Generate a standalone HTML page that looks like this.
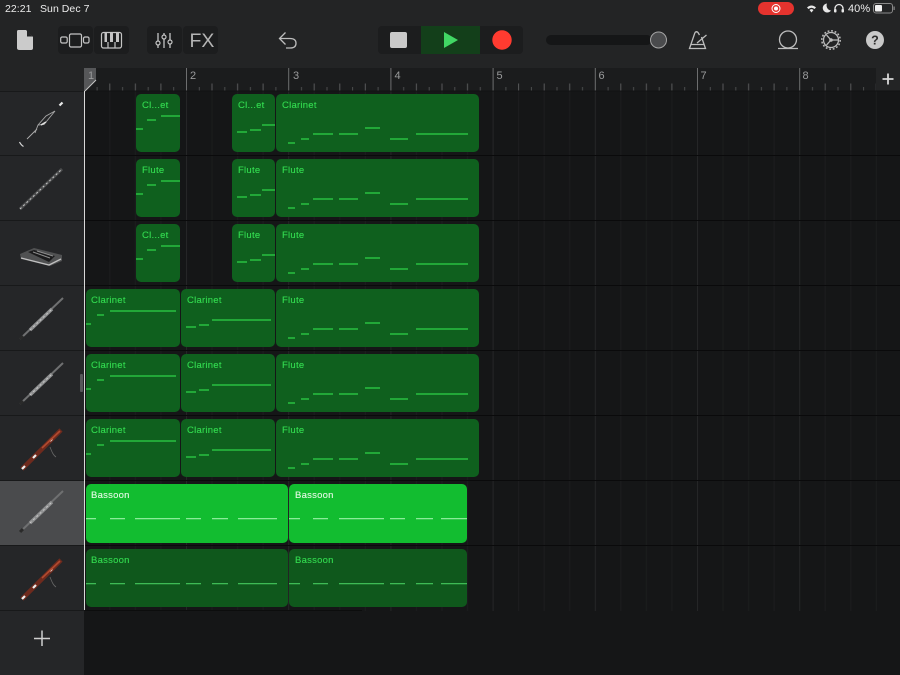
<!DOCTYPE html>
<html lang="en"><head><meta charset="utf-8"><title>GarageBand Tracks</title>
<style>
html,body{margin:0;padding:0;background:#151617;width:900px;height:675px;overflow:hidden}
svg{display:block}
text{font-family:"Liberation Sans",sans-serif}
.st{font-size:10.5px;fill:#ececec;letter-spacing:.05px}
.rn{font-size:11px;fill:#9a9b9c}
.l{font-size:9.5px;fill:#33dc50;letter-spacing:.25px;stroke:#33dc50;stroke-width:.12px}
.c{fill:#0f601e}
.i{fill:none;stroke:#c4c4c4;stroke-width:1.2}
.n{stroke:#2ed449;stroke-width:1.2;fill:none}
</style></head><body>
<svg width="900" height="675" viewBox="0 0 900 675" xmlns="http://www.w3.org/2000/svg">
<defs>
<pattern id="rp" patternUnits="userSpaceOnUse" x="83.8" y="68" width="102.2" height="23">
<path d="M.5 0V23" stroke="#6d6e6f" stroke-width="1"/>
<path d="M13.3 19V23M38.8 19V23M64.4 19V23M89.9 19V23" stroke="#4b4c4d" stroke-width="1"/>
<path d="M26 15.500V23M51.600 15.500V23M77.100 15.500V23" stroke="#58595a" stroke-width="1"/>
</pattern>
<pattern id="gp" patternUnits="userSpaceOnUse" x="83.8" y="91" width="102.2" height="520">
<path d="M.5 0V520" stroke="#252627" stroke-width="1"/>
<path d="M26 0V520M51.6 0V520M77.1 0V520" stroke="#1c1d1e" stroke-width="1"/>
</pattern>
<g id="n1" class="n"><path d="M0 35H7M11 26H20M25 22H44"/></g>
<g id="n4" class="n"><path d="M0 35H5M11 26H18M24 22H90"/></g>
<g id="n2" class="n"><path d="M5 38H15M18 36H29M30 31H43"/></g>
<g id="n5" class="n"><path d="M5 38H15M18 36H28M31 31H90"/></g>
<g id="n3" class="n"><path d="M12 49H19M25 45H33M37 40H57M63 40H82M89 34H104M114 45H132M140 40H192"/></g>
<path id="b1" d="M0 34.7H10M24 34.7H39M49 34.7H94M100 34.7H115M126 34.7H142M152 34.7H191"/>
<path id="b2" d="M0 34.7H11M24 34.7H39M50 34.7H95M101 34.7H116M127 34.7H144M152 34.7H178"/>
<g id="ob" fill="none">
<path d="M20 39L63 -2" stroke="#6f7071" stroke-width="2"/>
<path d="M30 30L52 9" stroke="#8f9091" stroke-width="3.500"/>
<path d="M30 30L52 9" stroke="#c8c8c8" stroke-width="1" stroke-dasharray="2 2.500"/>
<path d="M20 39L23 36" stroke="#2a2a2a" stroke-width="3"/>
</g>
<g id="bs" fill="none">
<path d="M22 39L61 0" stroke="#6e2a1d" stroke-width="4.500"/>
<path d="M22 39L25 36M33 28L36 25M50 11L52 9" stroke="#efefef" stroke-width="2.200"/>
<path d="M42 18L60 1" stroke="#b14a2f" stroke-width="1.600"/>
<path d="M50 17C52 22 53 25 56 27" stroke="#666" stroke-width=".8"/>
</g>
</defs>

<!-- backgrounds -->
<rect width="900" height="675" fill="#151617"/>
<rect width="900" height="68" fill="#232425"/>
<rect x="0" y="68" width="84" height="24" fill="#232425"/>
<rect x="84" y="68" width="792" height="23" fill="#1b1c1d"/>
<rect x="84" y="68" width="792" height="23" fill="url(#rp)"/>
<rect x="876" y="68" width="24" height="23" fill="#232425"/>
<rect x="0" y="91" width="84" height="584" fill="#252628"/>
<rect x="85" y="91" width="815" height="520" fill="url(#gp)"/>
<rect x="0" y="481" width="84" height="64" fill="#4a4b4d"/>

<!-- row lines -->
<path d="M85 155.500H900M85 220.500H900M85 285.500H900M85 350.500H900M85 415.500H900M85 480.500H900M85 545.500H900" stroke="#0a0a0b" stroke-width="1"/>
<path d="M85 91H900" stroke="#111213" stroke-width="1"/>
<path d="M0 91.500H84M0 155.500H84M0 220.500H84M0 285.500H84M0 350.500H84M0 415.500H84M0 480.500H84M0 545.500H84M0 610.500H84" stroke="#18191a" stroke-width="1"/>
<path d="M85 610.500H362" stroke="#0c0d0d" stroke-width="1"/>

<!-- status bar -->
<text class="st" x="5" y="12">22:21</text>
<text class="st" x="40" y="12">Sun Dec 7</text>
<rect x="758" y="2" width="36" height="13" rx="6.500" fill="#e5332e"/>
<circle cx="776" cy="8.500" r="4" fill="none" stroke="#fff" stroke-width="1"/><circle cx="776" cy="8.500" r="2" fill="#fff"/>
<path d="M807 7.500Q811.500 3.500 816 7.500L814.500 9Q811.500 6.500 808.500 9ZM809.500 10Q811.500 8.300 813.500 10L811.500 12.500Z" fill="#e8e8e8"/>
<path d="M827 3.500A4.500 4.500 0 1 0 831 10.500A5 5 0 0 1 827 3.500Z" fill="#e8e8e8"/>
<path d="M835 12V8.500A4 4 0 0 1 843 8.500V12" fill="none" stroke="#e8e8e8" stroke-width="1.300"/><rect x="834" y="9" width="2.500" height="3.500" rx="1" fill="#e8e8e8"/><rect x="841.500" y="9" width="2.500" height="3.500" rx="1" fill="#e8e8e8"/>
<text class="st" x="848" y="12" style="font-size:11px">40%</text>
<rect x="873.500" y="3.500" width="19" height="9.500" rx="2.500" fill="none" stroke="#8a8a8a" stroke-width="1"/>
<rect x="875" y="5" width="7" height="6.500" rx="1" fill="#f0f0f0"/><rect x="893.500" y="6.500" width="1.200" height="3.500" fill="#8a8a8a"/>

<!-- toolbar left -->
<path d="M18.500 30H26L33 37V48Q33 50 31 50H19.500Q17 50 17 48V31.500Q17 30 18.500 30Z" fill="#cbcbcb"/>
<path d="M27 30.500L32.500 36.500H27Z" fill="#232425"/>
<rect x="58" y="26" width="35" height="28" rx="4" fill="#1c1d1e"/>
<rect x="94" y="26" width="35" height="28" rx="4" fill="#1c1d1e"/>
<rect class="i" x="60.700" y="37" width="6.500" height="6" rx="1.500"/>
<rect class="i" x="69.500" y="34" width="12" height="13" rx="1.500"/>
<rect class="i" x="83.500" y="37" width="5.500" height="6" rx="1.500"/>
<rect class="i" x="101.500" y="32.500" width="20" height="15.500" rx="2"/>
<path d="M108 42V48M115 42V48" stroke="#c4c4c4" stroke-width="1.200"/>
<path d="M104.500 33V42H107V33ZM110 33V42H113V33ZM116 33V42H119V33Z" fill="#c4c4c4"/>
<rect x="147" y="26" width="35" height="28" rx="4" fill="#1c1d1e"/>
<rect x="183" y="26" width="35" height="28" rx="4" fill="#1c1d1e"/>
<path d="M158 33V48M164 33V48M170 33V48" stroke="#c4c4c4" stroke-width="1.300"/>
<circle cx="158" cy="43" r="2" fill="#1c1d1e" stroke="#c4c4c4" stroke-width="1.200"/>
<circle cx="164" cy="37" r="2" fill="#1c1d1e" stroke="#c4c4c4" stroke-width="1.200"/>
<circle cx="170" cy="42" r="2" fill="#1c1d1e" stroke="#c4c4c4" stroke-width="1.200"/>
<text x="189.500" y="47" style="font-size:19.500px;fill:#b4b4b4">FX</text>
<path d="M285.500 32.500L279.500 38.500L285.500 44.500M279.500 38.500H290Q296 38.500 296 43.200Q296 48 290 48H286" fill="none" stroke="#bdbdbd" stroke-width="1.300"/>

<!-- transport -->
<rect x="378" y="26" width="145" height="28" rx="4" fill="#1c1d1e"/>
<rect x="421" y="26" width="59" height="28" fill="#133f1a"/>
<rect x="390" y="32" width="17" height="16" rx="2" fill="#c9c9c9"/>
<path d="M444 32V48L458 40Z" fill="#41d764"/>
<circle cx="502" cy="40" r="9.700" fill="#ff3b30"/>
<rect x="546" y="35" width="106" height="10" rx="5" fill="#151617"/>
<circle cx="658.500" cy="40" r="8" fill="#4a4b4d" stroke="#a5a5a5" stroke-width="1"/>

<!-- toolbar right -->
<g fill="none" stroke="#bdbdbd" stroke-width="1.300">
<path d="M695 32.500L689.500 48.500H705.500L701.500 37M695 32.500Q696.500 31 698 32.500L699.500 35"/><path d="M690.500 44.500H704.500M697 43L706.500 35"/>
<circle cx="788" cy="39.500" r="8.500"/><path d="M778 48.500H798"/>
<circle cx="831" cy="40" r="7.500"/>
<circle cx="831" cy="40" r="9.200" stroke-dasharray="1.800 1.800" stroke-width="1.500"/>
<path d="M831 40L826.500 35M831 40L826.500 45M831 40H838"/>
</g>
<circle cx="831" cy="40" r="1.800" fill="#bdbdbd"/>
<circle cx="875" cy="40" r="9" fill="#c9c9c9"/>
<text x="875" y="44.500" text-anchor="middle" style="font-size:12.500px;font-weight:bold;fill:#2a2a2a">?</text>

<!-- ruler -->
<path d="M84 68H96V80L85 91H84Z" fill="#565759"/>
<path d="M96 80L85 91" stroke="#c8c8c8" stroke-width="1"/>
<text class="rn" x="88" y="79">1</text>
<text class="rn" x="190" y="79">2</text>
<text class="rn" x="293" y="79">3</text>
<text class="rn" x="394.500" y="79">4</text>
<text class="rn" x="496.500" y="79">5</text>
<text class="rn" x="598.500" y="79">6</text>
<text class="rn" x="700.500" y="79">7</text>
<text class="rn" x="802.500" y="79">8</text>
<path d="M888 73.500V84.500M882.500 79H893.500" stroke="#d8d8d8" stroke-width="1.800"/>

<!-- clips -->
<g class="c">
<rect x="136" y="94" width="44" height="58" rx="5"/><rect x="232" y="94" width="43" height="58" rx="5"/><rect x="276" y="94" width="203" height="58" rx="5"/>
<rect x="136" y="159" width="44" height="58" rx="5"/><rect x="232" y="159" width="43" height="58" rx="5"/><rect x="276" y="159" width="203" height="58" rx="5"/>
<rect x="136" y="224" width="44" height="58" rx="5"/><rect x="232" y="224" width="43" height="58" rx="5"/><rect x="276" y="224" width="203" height="58" rx="5"/>
<rect x="86" y="289" width="94" height="58" rx="5"/><rect x="181" y="289" width="94" height="58" rx="5"/><rect x="276" y="289" width="203" height="58" rx="5"/>
<rect x="86" y="354" width="94" height="58" rx="5"/><rect x="181" y="354" width="94" height="58" rx="5"/><rect x="276" y="354" width="203" height="58" rx="5"/>
<rect x="86" y="419" width="94" height="58" rx="5"/><rect x="181" y="419" width="94" height="58" rx="5"/><rect x="276" y="419" width="203" height="58" rx="5"/>
</g>
<rect x="86" y="484" width="202" height="59" rx="5" fill="#12bd30"/><rect x="289" y="484" width="178" height="59" rx="5" fill="#12bd30"/>
<rect x="86" y="549" width="202" height="58" rx="5" fill="#0f581c"/><rect x="289" y="549" width="178" height="58" rx="5" fill="#0f581c"/>

<!-- notes -->
<use href="#n1" x="136" y="94"/><use href="#n2" x="232" y="94"/><use href="#n3" x="276" y="94"/>
<use href="#n1" x="136" y="159"/><use href="#n2" x="232" y="159"/><use href="#n3" x="276" y="159"/>
<use href="#n1" x="136" y="224"/><use href="#n2" x="232" y="224"/><use href="#n3" x="276" y="224"/>
<use href="#n4" x="86" y="289"/><use href="#n5" x="181" y="289"/><use href="#n3" x="276" y="289"/>
<use href="#n4" x="86" y="354"/><use href="#n5" x="181" y="354"/><use href="#n3" x="276" y="354"/>
<use href="#n4" x="86" y="419"/><use href="#n5" x="181" y="419"/><use href="#n3" x="276" y="419"/>
<g fill="none" stroke="#9cf3a8" stroke-width="1.200"><use href="#b1" x="86" y="484"/><use href="#b2" x="289" y="484"/></g>
<g fill="none" stroke="#45c95d" stroke-width="1.200"><use href="#b1" x="86" y="549"/><use href="#b2" x="289" y="549"/></g>

<!-- labels -->
<text class="l" x="142" y="108">Cl...et</text><text class="l" x="238" y="108">Cl...et</text><text class="l" x="282" y="108">Clarinet</text>
<text class="l" x="142" y="173">Flute</text><text class="l" x="238" y="173">Flute</text><text class="l" x="282" y="173">Flute</text>
<text class="l" x="142" y="238">Cl...et</text><text class="l" x="238" y="238">Flute</text><text class="l" x="282" y="238">Flute</text>
<text class="l" x="91" y="303">Clarinet</text><text class="l" x="187" y="303">Clarinet</text><text class="l" x="282" y="303">Flute</text>
<text class="l" x="91" y="368">Clarinet</text><text class="l" x="187" y="368">Clarinet</text><text class="l" x="282" y="368">Flute</text>
<text class="l" x="91" y="433">Clarinet</text><text class="l" x="187" y="433">Clarinet</text><text class="l" x="282" y="433">Flute</text>
<text class="l" x="91" y="498" style="fill:#e4f9e4;stroke:#e4f9e4">Bassoon</text><text class="l" x="295" y="498" style="fill:#e4f9e4;stroke:#e4f9e4">Bassoon</text>
<text class="l" x="91" y="563">Bassoon</text><text class="l" x="295" y="563">Bassoon</text>

<!-- playhead + scroll handle -->
<path d="M84.500 91V610" stroke="#d8d8d8" stroke-width="1"/>
<rect x="80" y="374" width="3" height="18" rx="1" fill="#56575a"/>

<!-- instruments -->
<g fill="none">
<path d="M19.500 142Q21 145 23.500 146.500" stroke="#d8d8d8" stroke-width="1.200"/>
<path d="M27 139L37 129" stroke="#b0b0b0" stroke-width=".9"/>
<path d="M35 133L38 125L44 124.500L55 111L46 116L38 125" stroke="#a8a8a8" stroke-width=".9"/>
<path d="M41 125L46 122" stroke="#e0e0e0" stroke-width="1.500"/>
<path d="M59.500 105.500L62.500 102.500" stroke="#e8e8e8" stroke-width="2.200"/>
<path d="M20 209L62 169" stroke="#4c4d4e" stroke-width="3"/>
<path d="M20 209L62 169" stroke="#c8c8c8" stroke-width="1" stroke-dasharray="2 2.500"/>
</g>
<path d="M20 254L34 248L62 255L62 261L50 266L21 259Z" fill="#505152"/>
<path d="M28 252L34 250L55 256L49 262Z" fill="#1b1b1c"/>
<path d="M21 258L49 265L61 259" fill="none" stroke="#c0c0c0" stroke-width="1.300"/>
<path d="M33 252L50 258M37 251L53 256" stroke="#8e8e8e" stroke-width="1"/>
<use href="#ob" x="0" y="300"/><use href="#ob" x="0" y="365"/><use href="#ob" x="0" y="493"/>
<use href="#bs" x="0" y="430"/><use href="#bs" x="0" y="560"/>
<path d="M42 630.500V646M34 638.500H50" stroke="#cfcfcf" stroke-width="1.500"/>
</svg>
</body></html>
